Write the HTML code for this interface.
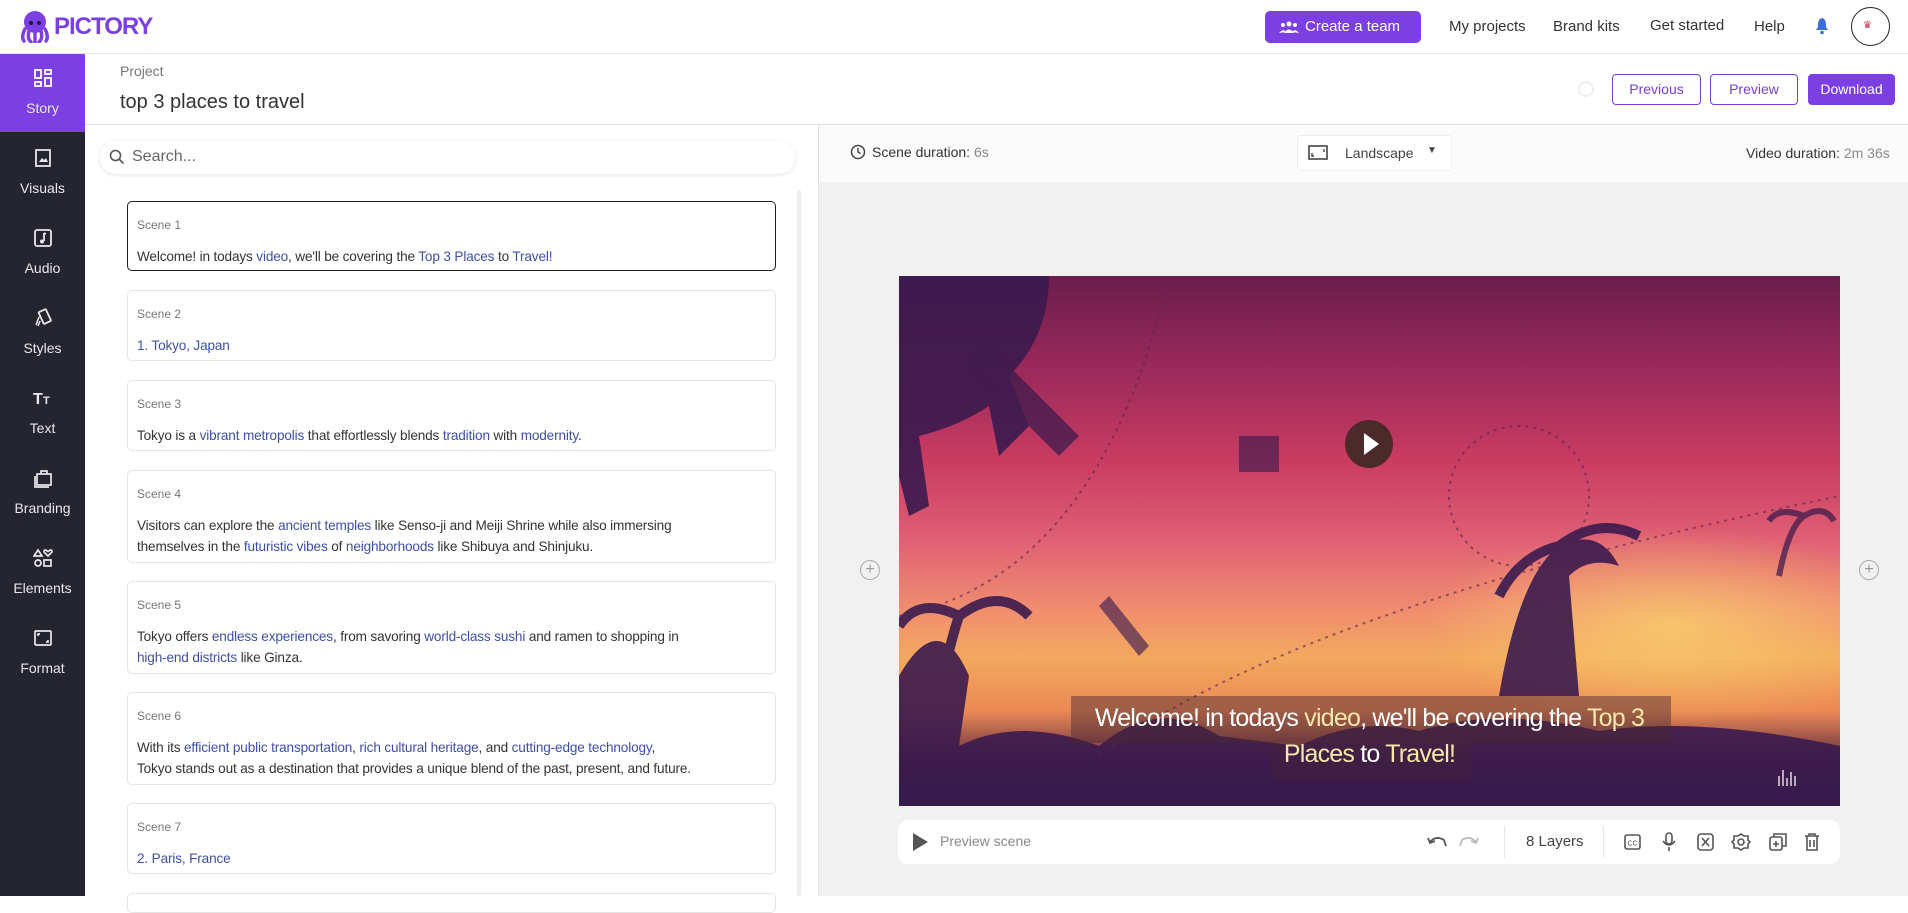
<!DOCTYPE html>
<html><head><meta charset="utf-8">
<style>
*{box-sizing:border-box;margin:0;padding:0}
body{width:1908px;height:896px;overflow:hidden;font-family:"Liberation Sans",sans-serif;background:#fff;position:relative;color:#333}
.abs{position:absolute}
.hdr{left:0;top:0;width:1908px;height:54px;border-bottom:1px solid #e6e6e6;background:#fff}
.nav{top:18px;font-size:15px;color:#333}
.side{left:0;top:54px;width:85px;height:842px;background:#25252f}
.si{position:absolute;left:0;width:85px;height:80px;color:#e8e8ec;font-size:14px;text-align:center}
.si svg{position:absolute;left:33px;top:14px}
.si span{position:absolute;left:0;right:0;top:46px}
.card{position:absolute;left:127px;width:649px;border:1px solid #e4e4e4;border-radius:5px;background:#fff}
.card .l{position:absolute;left:9px;top:16px;font-size:12px;color:#777}
.card .t{position:absolute;left:9px;top:44px;font-size:13.6px;color:#333;line-height:21px;width:630px;letter-spacing:-0.15px}
.card .b{color:#3d4fa6}
.btn{top:74px;height:31px;border:1px solid #7a3fc9;border-radius:4px;font-size:14px;color:#7a3fc9;text-align:center;line-height:29px;background:#fff}
.ic{stroke:#555;fill:none;stroke-width:1.6}
</style></head><body>
<div class="abs hdr"></div>
<svg class="abs" style="left:19px;top:9px" width="32" height="34" viewBox="0 0 32 34"><ellipse cx="16" cy="13" rx="11" ry="11" fill="#7b3fe4"/><path d="M6 20 Q2 28 5 32 M10 22 Q8 30 12 33 M16 23 V33 M22 22 Q24 30 20 33 M26 20 Q30 28 27 32" stroke="#7b3fe4" stroke-width="3.5" fill="none" stroke-linecap="round"/><circle cx="12" cy="14" r="2" fill="#1a1a2e"/><circle cx="20" cy="14" r="2" fill="#1a1a2e"/></svg>
<div class="abs" style="left:54px;top:13px;font-size:24px;font-weight:bold;color:#7b3fe4;letter-spacing:-1px">PICTORY</div>
<div class="abs" style="left:1265px;top:11px;width:156px;height:32px;background:#7b3fe4;border-radius:5px;color:#fff;font-size:15px;line-height:32px;padding-left:40px">Create a team</div>
<svg class="abs" style="left:1279px;top:21px" width="20" height="12" viewBox="0 0 20 12"><circle cx="10" cy="3" r="2.5" fill="#fff"/><circle cx="4" cy="4" r="2" fill="#fff"/><circle cx="16" cy="4" r="2" fill="#fff"/><path d="M5 12 Q10 5 15 12Z M0 12 Q4 7 7 11Z M13 11 Q16 7 20 12Z" fill="#fff"/></svg>
<div class="abs nav" style="left:1449px">My projects</div>
<div class="abs nav" style="left:1553px">Brand kits</div>
<div class="abs nav" style="left:1650px;top:17px">Get started</div>
<div class="abs nav" style="left:1754px">Help</div>
<svg class="abs" style="left:1815px;top:17px" width="14" height="18" viewBox="0 0 14 18"><path d="M7 1 C3 2 3 6 3 10 L1 13 H13 L11 10 C11 6 11 2 7 1Z" fill="#3a6fd8"/><circle cx="7" cy="15.5" r="1.8" fill="#3a6fd8"/></svg>
<div class="abs" style="left:1851px;top:7px;width:39px;height:39px;border:1.5px solid #222;border-radius:50%"></div>
<div class="abs" style="left:1863px;top:20px;font-size:10px;color:#c03050">♛</div>

<div class="abs side"></div>
<div class="si" style="top:54px;background:#7b3fe4;height:78px"><svg width="20" height="20" viewBox="0 0 20 20"><g fill="none" stroke="#fff" stroke-width="1.8"><rect x="2" y="2" width="6" height="8"/><rect x="12" y="2" width="6" height="4"/><rect x="2" y="14" width="6" height="4"/><rect x="12" y="10" width="6" height="8"/></g></svg><span>Story</span></div>
<div class="si" style="top:134px"><svg width="20" height="20" viewBox="0 0 20 20"><rect x="3" y="2" width="14" height="16" fill="none" stroke="#e8e8ec" stroke-width="1.8"/><path d="M6 14 L9 10 L11 12 L13 10 L15 14Z" fill="#e8e8ec"/></svg><span>Visuals</span></div>
<div class="si" style="top:214px"><svg width="20" height="20" viewBox="0 0 20 20"><rect x="2" y="2" width="16" height="16" rx="2" fill="none" stroke="#e8e8ec" stroke-width="1.8"/><path d="M11 5 V13 M11 5 L13 6" stroke="#e8e8ec" stroke-width="1.8" fill="none"/><circle cx="9" cy="13.5" r="2" fill="#e8e8ec"/></svg><span>Audio</span></div>
<div class="si" style="top:294px"><svg width="20" height="20" viewBox="0 0 20 20"><rect x="8" y="2" width="8" height="13" rx="1" transform="rotate(-25 12 9)" fill="none" stroke="#e8e8ec" stroke-width="1.8"/><path d="M3 17 L6 9 M5 18 L7 13" stroke="#e8e8ec" stroke-width="1.6"/></svg><span>Styles</span></div>
<div class="si" style="top:374px"><svg width="22" height="20" viewBox="0 0 22 20"><text x="0" y="16" font-family="Liberation Sans" font-weight="bold" font-size="16" fill="#e8e8ec">T</text><text x="10" y="16" font-family="Liberation Sans" font-weight="bold" font-size="11" fill="#e8e8ec">T</text></svg><span>Text</span></div>
<div class="si" style="top:454px"><svg width="20" height="20" viewBox="0 0 20 20"><g fill="none" stroke="#e8e8ec" stroke-width="1.7"><rect x="4" y="6" width="14" height="11"/><path d="M8 6 V3 H14 V6 M2 8 V19 H16"/></g></svg><span>Branding</span></div>
<div class="si" style="top:534px"><svg width="20" height="20" viewBox="0 0 20 20"><g fill="none" stroke="#e8e8ec" stroke-width="1.7"><path d="M5 2 L9 8 H1Z"/><path d="M15 8 L11 4 Q11 1 13.5 2.5 L15 3.5 L16.5 2.5 Q19 1 19 4Z"/><circle cx="5" cy="15" r="3"/><rect x="11" y="12" width="7" height="6"/></g></svg><span>Elements</span></div>
<div class="si" style="top:614px"><svg width="20" height="20" viewBox="0 0 20 20"><g fill="none" stroke="#e8e8ec" stroke-width="1.7"><rect x="2" y="3" width="16" height="14" rx="1"/><path d="M5 8 V6 H7 M15 12 V14 H13"/></g></svg><span>Format</span></div>

<div class="abs" style="left:120px;top:63px;font-size:14px;color:#777">Project</div>
<div class="abs" style="left:120px;top:91px;font-size:20px;color:#333">top 3 places to travel</div>
<div class="abs" style="left:1578px;top:81px;width:16px;height:16px;border:2px solid #eee;border-radius:50%"></div>
<div class="abs btn" style="left:1612px;width:89px">Previous</div>
<div class="abs btn" style="left:1710px;width:88px">Preview</div>
<div class="abs btn" style="left:1808px;width:87px;background:#7b3fe4;color:#fff;border-color:#7b3fe4">Download</div>
<div class="abs" style="left:85px;top:124px;width:1823px;height:1px;background:#e2e2e2"></div>

<div class="abs" style="left:100px;top:141px;width:695px;height:33px;border-radius:16px;background:#fff;box-shadow:0 1px 5px rgba(0,0,0,0.12)"></div>
<svg class="abs" style="left:109px;top:149px" width="16" height="16" viewBox="0 0 16 16"><circle cx="6.5" cy="6.5" r="5" fill="none" stroke="#555" stroke-width="1.6"/><path d="M10 10 L14.5 14.5" stroke="#555" stroke-width="1.6"/></svg>
<div class="abs" style="left:132px;top:148px;font-size:16px;color:#666">Search...</div>
<div class="abs" style="left:797px;top:190px;width:4px;height:706px;background:#ececec;border-radius:2px"></div>
<div class="abs" style="left:818px;top:124px;width:1px;height:772px;background:#e4e4e4"></div>

<div class="card" style="top:201px;height:70px;border:1.5px solid #222"><div class="l">Scene 1</div><div class="t">Welcome! in todays <span class="b">video</span>, we'll be covering the <span class="b">Top 3 Places</span> to <span class="b">Travel!</span></div></div>
<div class="card" style="top:290px;height:71px"><div class="l">Scene 2</div><div class="t"><span class="b">1. Tokyo, Japan</span></div></div>
<div class="card" style="top:380px;height:71px"><div class="l">Scene 3</div><div class="t">Tokyo is a <span class="b">vibrant metropolis</span> that effortlessly blends <span class="b">tradition</span> with <span class="b">modernity</span>.</div></div>
<div class="card" style="top:470px;height:93px"><div class="l">Scene 4</div><div class="t">Visitors can explore the <span class="b">ancient temples</span> like Senso-ji and Meiji Shrine while also immersing<br>themselves in the <span class="b">futuristic vibes</span> of <span class="b">neighborhoods</span> like Shibuya and Shinjuku.</div></div>
<div class="card" style="top:581px;height:93px"><div class="l">Scene 5</div><div class="t">Tokyo offers <span class="b">endless experiences</span>, from savoring <span class="b">world-class sushi</span> and ramen to shopping in<br><span class="b">high-end districts</span> like Ginza.</div></div>
<div class="card" style="top:692px;height:93px"><div class="l">Scene 6</div><div class="t">With its <span class="b">efficient public transportation</span>, <span class="b">rich cultural heritage</span>, and <span class="b">cutting-edge technology</span>,<br>Tokyo stands out as a destination that provides a unique blend of the past, present, and future.</div></div>
<div class="card" style="top:803px;height:71px"><div class="l">Scene 7</div><div class="t"><span class="b">2. Paris, France</span></div></div>
<div class="card" style="top:893px;height:20px"></div>

<div class="abs" style="left:819px;top:125px;width:1089px;height:771px;background:#f1f1f1"></div>
<div class="abs" style="left:819px;top:125px;width:1089px;height:57px;background:#fbfbfb"></div>
<svg class="abs" style="left:850px;top:144px" width="16" height="16" viewBox="0 0 16 16"><circle cx="8" cy="8" r="6.5" fill="none" stroke="#444" stroke-width="1.5"/><path d="M8 4 V8 L10.5 9.5" stroke="#444" stroke-width="1.5" fill="none"/></svg>
<div class="abs" style="left:872px;top:144px;font-size:14px;color:#333">Scene duration: <span style="color:#888">6s</span></div>
<div class="abs" style="left:1297px;top:135px;width:155px;height:36px;background:#fff;border:1px solid #eee;border-radius:3px"></div>
<svg class="abs" style="left:1308px;top:145px" width="20" height="15" viewBox="0 0 20 15"><rect x="1" y="1" width="18" height="13" fill="none" stroke="#444" stroke-width="1.6"/><path d="M4 8 V11 H6 M16 4 V7" stroke="#444" stroke-width="1.4" fill="none"/></svg>
<div class="abs" style="left:1345px;top:145px;font-size:14px;color:#444">Landscape</div>
<div class="abs" style="left:1427px;top:145px;font-size:10px;color:#444">▼</div>
<div class="abs" style="left:1746px;top:145px;font-size:14px;color:#333">Video duration: <span style="color:#888">2m 36s</span></div>

<div class="abs" style="left:899px;top:276px;width:941px;height:530px;overflow:hidden;background:linear-gradient(180deg,#6a1d4e 0%,#9c2a5a 18%,#c93c62 35%,#e06074 50%,#ef8a70 62%,#f3a85e 72%,#eb8a55 82%,#5a2440 92%,#2a1545 100%)">
 <div class="abs" style="left:520px;top:250px;width:421px;height:200px;background:radial-gradient(ellipse at 60% 50%,rgba(250,215,110,0.7),rgba(250,215,110,0) 70%)"></div>
 <svg class="abs" style="left:0;top:0" width="941" height="530" viewBox="0 0 941 530">
  <g fill="#3a1a4e" opacity="0.9">
   <path d="M0 0 H150 Q150 60 110 100 L130 150 L100 180 L90 130 Q60 150 20 160 L30 230 L10 240 L0 200Z"/>
   <path d="M90 70 L180 160 L160 180 L70 90Z" opacity="0.8"/>
   <path d="M0 520 L0 400 Q40 330 70 400 L60 470 Q120 440 200 470 Q260 420 320 460 L400 470 Q460 440 520 455 Q600 430 700 455 Q800 440 941 470 V530 H0Z"/>
   <path d="M600 420 Q620 300 660 270 Q700 250 720 290 Q690 280 670 300 L680 420Z"/>
   <path d="M660 270 Q620 280 600 320 M660 270 Q700 240 740 260" stroke="#3a1a4e" stroke-width="10" fill="none"/>
   <path d="M30 500 Q40 400 60 340 M60 340 Q20 320 0 350 M60 340 Q100 310 130 340" stroke="#3a1a4e" stroke-width="10" fill="none"/>
   <rect x="340" y="160" width="40" height="36" opacity="0.7"/>
   <path d="M880 300 Q890 250 905 240 M905 240 Q880 230 870 245 M905 240 Q925 228 935 245" stroke="#3a1a4e" stroke-width="6" fill="none" opacity="0.8"/>
   <path d="M210 320 L250 370 L240 380 L200 330Z" opacity="0.7"/>
  </g>
  <g fill="none" stroke="#5a2450" stroke-width="2" stroke-dasharray="3 5" opacity="0.6">
   <path d="M0 340 Q200 300 270 0"/>
   <path d="M200 480 Q400 330 941 220"/>
   <circle cx="620" cy="220" r="70"/>
  </g>
  <path d="M880 510 v-10 M884 510 v-16 M888 510 v-8 M892 510 v-14 M896 510 v-10" stroke="#ddd" stroke-width="1.5"/>
 </svg>
 <div class="abs" style="left:446px;top:144px;width:48px;height:48px;border-radius:50%;background:#4a2a2a"></div>
 <div class="abs" style="left:465px;top:157px;width:0;height:0;border-left:15px solid #fff;border-top:11px solid transparent;border-bottom:11px solid transparent"></div>
 <div class="abs" style="left:172px;top:420px;width:600px;height:47px;background:rgba(70,40,50,0.45)"></div>
 <div class="abs" style="left:372px;top:467px;width:200px;height:36px;background:rgba(70,40,50,0.3)"></div>
 <div class="abs" style="left:0;width:941px;top:424px;text-align:center;color:#fff;font-size:25px;line-height:36px;letter-spacing:-0.8px">Welcome! in todays <span style="color:#f6e8a8">video</span>, we'll be covering the <span style="color:#f6e8a8">Top 3</span><br><span style="color:#f6e8a8">Places</span> to <span style="color:#f6e8a8">Travel!</span></div>
</div>
<div class="abs" style="left:860px;top:560px;width:20px;height:20px;border:1.5px solid #aaa;border-radius:50%;color:#999;text-align:center;line-height:17px;font-size:16px">+</div>
<div class="abs" style="left:1859px;top:560px;width:20px;height:20px;border:1.5px solid #aaa;border-radius:50%;color:#999;text-align:center;line-height:17px;font-size:16px">+</div>

<div class="abs" style="left:898px;top:820px;width:942px;height:44px;background:#fff;border-radius:10px"></div>
<div class="abs" style="left:913px;top:833px;width:0;height:0;border-left:15px solid #555;border-top:9px solid transparent;border-bottom:9px solid transparent"></div>
<div class="abs" style="left:940px;top:833px;font-size:14px;color:#888">Preview scene</div>
<svg class="abs" style="left:1426px;top:832px" width="60" height="20" viewBox="0 0 60 20"><path d="M4 10 Q10 3 18 8 L20 14" stroke="#555" stroke-width="1.8" fill="none"/><path d="M2 6 L4 11 L9 9" stroke="#555" stroke-width="1.8" fill="none"/><path d="M50 10 Q44 3 36 8 L34 14" stroke="#bbb" stroke-width="1.8" fill="none"/><path d="M52 6 L50 11 L45 9" stroke="#bbb" stroke-width="1.8" fill="none"/></svg>
<div class="abs" style="left:1504px;top:826px;width:1px;height:32px;background:#e6e6e6"></div>
<div class="abs" style="left:1526px;top:833px;font-size:15px;color:#444">8 Layers</div>
<div class="abs" style="left:1603px;top:826px;width:1px;height:32px;background:#e6e6e6"></div>
<svg class="abs" style="left:1623px;top:831px" width="210" height="22" viewBox="0 0 210 22"><g class="ic">
<rect x="2" y="4" width="15" height="14" rx="2"/><text x="4.5" y="14.5" font-size="7" font-family="Liberation Sans" fill="#555" stroke="none">CC</text>
<rect x="43" y="2" width="6" height="11" rx="3"/><path d="M40 10 Q46 18 52 10 M46 16 V20"/>
<rect x="75" y="3" width="15" height="16" rx="3"/><path d="M79 7 L86 15 M86 7 L79 15"/>
<circle cx="118" cy="11" r="3"/><path d="M118 3 L121 5 L125 5 L125 9 L127 11 L125 13 L125 17 L121 17 L118 19 L115 17 L111 17 L111 13 L109 11 L111 9 L111 5 L115 5Z"/>
<rect x="147" y="6" width="12" height="13" rx="2"/><path d="M151 6 V3 H163 V15 H159 M153 10 V16 M150 13 H156"/>
<path d="M182 5 H196 M186 5 V3 H192 V5 M184 5 V19 H194 V5 M187 9 V16 M191 9 V16"/>
</g></svg>
</body></html>
